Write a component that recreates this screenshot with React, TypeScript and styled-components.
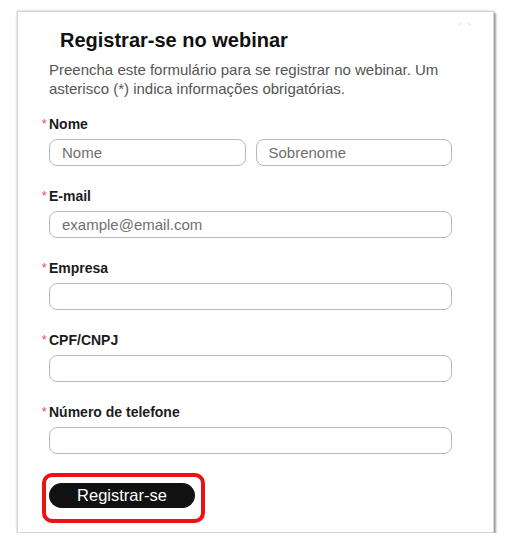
import React from 'react';
import styled, { createGlobalStyle } from 'styled-components';

const GlobalStyle = createGlobalStyle`
  html, body {
    margin: 0;
    padding: 0;
    background: #ffffff;
  }

  body {
    font-family: 'Liberation Sans', Arial, sans-serif;
  }
`;

type Field = {
  label: string;
  placeholders: string[];
};

const fields: Field[] = [
  { label: 'Nome', placeholders: ['Nome', 'Sobrenome'] },
  { label: 'E-mail', placeholders: ['example@email.com'] },
  { label: 'Empresa', placeholders: [''] },
  { label: 'CPF/CNPJ', placeholders: [''] },
  { label: 'Número de telefone', placeholders: [''] },
];

const App = () => {
  return (
    <>
      <GlobalStyle />
      <Page>
        <Card>
          <CloseButton aria-label="Fechar">
            <svg width="14" height="6" viewBox="0 0 14 6">
              <path d="M1 4 L3 2" stroke="#c8c8c8" strokeWidth="1" fill="none" />
              <path d="M10 2 L12 4" stroke="#c8c8c8" strokeWidth="1" fill="none" />
            </svg>
          </CloseButton>
          <Title>Registrar-se no webinar</Title>
          <Description>
            Preencha este formulário para se registrar no webinar. Um asterisco (*) indica
            informações obrigatórias.
          </Description>
          <Form>
            {fields.map((field) => (
              <FieldGroup key={field.label}>
                <Label>
                  <Asterisk>*</Asterisk>
                  {field.label}
                </Label>
                <InputRow $columns={field.placeholders.length}>
                  {field.placeholders.map((placeholder, i) => (
                    <Input key={i} placeholder={placeholder} />
                  ))}
                </InputRow>
              </FieldGroup>
            ))}
          </Form>
          <Highlight>
            <SubmitButton type="button">Registrar-se</SubmitButton>
          </Highlight>
        </Card>
      </Page>
    </>
  );
};

export default App;

const Page = styled.div`
  padding: 11px 0 0 17px;
`;

const Card = styled.div`
  position: relative;
  box-sizing: border-box;
  width: 477px;
  padding: 16px 41px 9px 31px;
  background: #ffffff;
  border: 1px solid #d6d6d6;
  box-shadow: 0 0 2px rgba(0, 0, 0, 0.3), 2px 2px 2px rgba(0, 0, 0, 0.35);
`;

const CloseButton = styled.button`
  position: absolute;
  top: 9px;
  right: 21px;
  padding: 0;
  border: none;
  background: transparent;
  line-height: 0;
`;

const Title = styled.h2`
  margin: 0 0 8px 11px;
  font-size: 20px;
  line-height: 24px;
  font-weight: 700;
  color: #111111;
`;

const Description = styled.p`
  margin: 0 0 18px;
  font-size: 15px;
  line-height: 19px;
  color: #555555;
`;

const Form = styled.div`
  display: flex;
  flex-direction: column;
  gap: 22px;
`;

const FieldGroup = styled.div`
  display: flex;
  flex-direction: column;
  gap: 7px;
`;

const Label = styled.label`
  display: flex;
  align-items: flex-start;
  font-size: 14px;
  line-height: 16px;
  font-weight: 700;
  color: #1c1c1c;
`;

const Asterisk = styled.span`
  width: 7px;
  margin-left: -7px;
  font-size: 12px;
  font-weight: 400;
  color: #e5484d;
`;

const InputRow = styled.div<{ $columns: number }>`
  display: grid;
  grid-template-columns: repeat(${(p) => p.$columns}, 1fr);
  gap: 10px;
`;

const Input = styled.input`
  box-sizing: border-box;
  width: 100%;
  height: 27px;
  padding: 0 12px;
  border: 1px solid #b8b8b8;
  border-radius: 8px;
  background: #ffffff;
  font-family: 'Liberation Sans', Arial, sans-serif;
  font-size: 15px;
  color: #333333;
  outline: none;

  &::placeholder {
    color: #6f6f6f;
  }
`;

const Highlight = styled.div`
  display: inline-block;
  margin: 19px 0 0 -7px;
  padding: 6px 6px 11px 3px;
  border: 4px solid #ee1111;
  border-radius: 10px;
`;

const SubmitButton = styled.button`
  display: block;
  width: 146px;
  height: 25px;
  padding: 0;
  border: none;
  border-radius: 13px;
  background: #111111;
  font-family: 'Liberation Sans', Arial, sans-serif;
  font-size: 16.5px;
  color: #ffffff;
  cursor: pointer;
`;
